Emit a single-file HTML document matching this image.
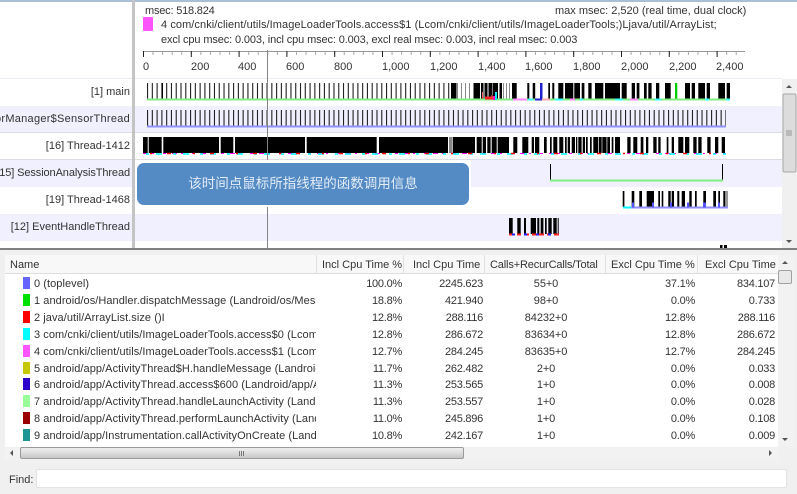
<!DOCTYPE html>
<html><head><meta charset="utf-8">
<style>
html,body{margin:0;padding:0;background:#fff}
#p{position:relative;width:797px;height:494px;overflow:hidden;background:#fff;font:11px/18px "Liberation Sans","Noto Sans CJK SC",sans-serif;color:#333;filter:blur(.3px)}
#p div{position:absolute;white-space:nowrap}
.l{right:667px;text-align:right}
.r{text-align:right;letter-spacing:-.25px}
.c{left:486px;width:120px;text-align:center;letter-spacing:-.1px}
.n{left:34px;width:282px;overflow:hidden;letter-spacing:.06px}
.s{left:23px;width:7px;height:12px}
.h{top:256px;height:16px;color:#333}
svg{position:absolute;left:0;top:0}
</style></head><body>
<div id="p">
<svg width="797" height="494" viewBox="0 0 797 494">
<rect x="0" y="0" width="797" height="2" fill="#a9bfd3"/>
<rect x="0" y="78" width="782" height="1" fill="#ececf2"/>
<rect x="0" y="106" width="782" height="26" fill="#f0f0ff"/>
<rect x="0" y="132" width="782" height="1" fill="#dcdce4"/>
<rect x="0" y="159" width="782" height="1" fill="#dcdce4"/>
<rect x="0" y="160" width="782" height="27" fill="#f0f0ff"/>
<rect x="0" y="214" width="782" height="27" fill="#f0f0ff"/>
<rect x="132" y="0" width="3" height="248" fill="#c4c4c4"/>
<rect x="135" y="160" width="336" height="47" fill="#fff"/>
<!-- ruler -->
<line x1="143" x2="745" y1="51.500" y2="51.500" stroke="#999"/>
<line x1="143" x2="745" y1="53.500" y2="53.500" stroke="#aaa" stroke-width="3" stroke-dasharray="1 8.560"/>
<line x1="143" x2="745" y1="54" y2="54" stroke="#222" stroke-width="6" stroke-dasharray="1 46.800"/>
<!-- row 1 -->
<line x1="147" x2="450" y1="91" y2="91" stroke="#222" stroke-width="16" stroke-dasharray="1.100 3.680"/>
<line x1="162" x2="163" y1="91" y2="91" stroke="#000" stroke-width="16"/>
<path fill="none" stroke="#000" stroke-width="16" d="M451 91h5.500M473.500 91h6.500M481 91h2.500M484.500 91h3M488.500 91h3.500M492.500 91h5.500M499.500 91h2.500M512 91h4.700M527.300 91h2M532.700 91h2.500M548.300 91h1.700M552.300 91h2M558.300 91h5M565 91h8.300M574.300 91h5.700M581.700 91h2.700M588.300 91h3.300M595 91h8.300M605 91h15M621.700 91h5M631.700 91h3.300M636.700 91h2.700M644 91h2.700M648.300 91h3.300M656 91h3.300M665 91h5.700M685 91h5M691.700 91h3.300M698.300 91h6.700M706.700 91h3.300M718.300 91h6.700M726.700 91h3.300"/>
<path fill="none" stroke="#888" stroke-width="16" d="M457 91h1M461 91h1M465 91h1M469 91h1M503 91h1M506 91h1M509 91h1"/>
<path fill="none" stroke="#22c" stroke-width="16" d="M540 91h2.500"/>
<path fill="none" stroke="#0c0" stroke-width="16" d="M675 91h2.300"/>
<line x1="147" x2="730" y1="99.500" y2="99.500" stroke="#80ee80" stroke-width="2"/>
<path fill="none" stroke="#f22" stroke-width="3" d="M482 97h1M485 98h8"/>
<path fill="none" stroke="#f66" stroke-width="1" d="M482.500 92v5M492 95v3"/>
<path fill="none" stroke="#0ef" stroke-width="2" d="M496 92v8"/>
<path fill="none" stroke="#f0c" stroke-width="2" d="M494 96v4"/>
<path fill="none" stroke="#f8f" stroke-width="2" d="M513 99.500h14M570 99.500h5M630 99.500h8"/>
<path fill="none" stroke="#3ff" stroke-width="2" d="M528 99.500h5M555 99.500h8M580 99.500h3M615 99.500h8M655 99.500h6M705 99.500h4M726 99.500h4"/>
<path fill="none" stroke="#22c" stroke-width="2" d="M535 99.500h7"/>
<path fill="none" stroke="#faa" stroke-width="2" d="M542 99.500h8"/>
<!-- row 2 -->
<line x1="147" x2="726" y1="118" y2="118" stroke="#222" stroke-width="16" stroke-dasharray="1.100 3.680"/>
<line x1="147" x2="726" y1="126.500" y2="126.500" stroke="#9090ff" stroke-width="2"/>
<!-- row 3 -->
<path fill="none" stroke="#000" stroke-width="16" d="M143 145h4.700M148.700 145h13M163.300 145h55.700M220.700 145h12.600M235 145h70M306.700 145h70M379 145h69M452.700 145h22.300M476.700 145h5M482.700 145h3.300M487.300 145h3.300M491.700 145h5M497.700 145h11.300M513.300 145h4M522.300 145h6M531.700 145h2.300M535 145h4.300M544 145h2.700M550 145h1.700M553.300 145h4M559.300 145h4M565 145h1.700M567.700 145h2.300M571.700 145h3.300M576 145h1.300M578.300 145h3.300M582.700 145h2.300M586 145h1.700M590 145h1.700M593.300 145h5M599 145h2.700M602.300 145h4.300M607.300 145h2.700M611.700 145h1.700M615 145h5M627.300 145h3.300M633.300 145h4M640.700 145h2.700M646 145h2.300M653.300 145h3.300M658.300 145h2.300M666.700 145h1.700M671.700 145h2.300M678.300 145h5M685 145h4.300M693.300 145h3.300M698.300 145h3.300M707.300 145h3.300M715 145h3.300M721.700 145h3.300"/>
<path fill="none" stroke="#888" stroke-width="16" d="M449 145h3"/>
<line x1="143" x2="726" y1="153.500" y2="153.500" stroke="#f0f" stroke-width="1" stroke-dasharray="5 4 2 9 3 6"/>
<line x1="146" x2="726" y1="154" y2="154" stroke="#0ff" stroke-width="1.500" stroke-dasharray="3 7 6 11"/>
<line x1="150" x2="726" y1="153.500" y2="153.500" stroke="#f00" stroke-width="1.500" stroke-dasharray="2 15 4 22"/>
<!-- row 4 -->
<path fill="none" stroke="#000" d="M550.500 164V181M722.500 164V181"/>
<line x1="550" x2="723" y1="180.500" y2="180.500" stroke="#80ee80" stroke-width="2"/>
<!-- row 5 -->
<path fill="none" stroke="#000" stroke-width="16" d="M622.700 199h1.700M631.700 199h2.600M639.300 199h2.700M646.700 199h7.300M658.300 199h1.700M661.700 199h1.600M668.300 199h2.400M671.700 199h2.300M677.300 199h2M681.700 199h3.300M689.300 199h2.400M695 199h1.700M703.300 199h2.700M713.300 199h2.700M718.300 199h1.700M723.300 199h2"/>
<path fill="none" stroke="#999" stroke-width="16" d="M725.300 199h2.700"/>
<line x1="623" x2="728" y1="207.500" y2="207.500" stroke="#9090ff" stroke-width="2"/>
<path fill="none" stroke="#55f" stroke-width="5" d="M632 205h2M652 205h2M670 205h2M687 205h2M703 205h3M718 205h2"/>
<path fill="none" stroke="#0ff" stroke-width="2" d="M623 207.500h8"/>
<!-- row 6 -->
<path fill="none" stroke="#000" stroke-width="16" d="M509 226h3.700M517.300 226h3.400M524 226h2M530.700 226h5.300M537.300 226h2M540.700 226h2.700M545 226h1.700M548.300 226h3.400M553.300 226h3.400M557.700 226h1"/>
<line x1="509" x2="559" y1="234.500" y2="234.500" stroke="#f22" stroke-width="2" stroke-dasharray="5 3 4 3"/>
<line x1="512" x2="559" y1="234.500" y2="234.500" stroke="#22f" stroke-width="2" stroke-dasharray="3 9"/>
<!-- row 7 -->
<path fill="none" stroke="#000" stroke-width="3" d="M720 246.500h2.500M724 246.500h3"/>
<!-- cursor -->
<path fill="none" stroke="#858585" d="M267.500 50V160M267.500 207V248"/>
<!-- callout -->
<rect x="137" y="163" width="332" height="42" rx="7" fill="#548bc4"/>
<!-- upper scrollbar -->
<rect x="782" y="79" width="15" height="169" fill="#f0f0f0"/>
<rect x="783" y="94" width="13" height="78" rx="1.500" fill="#dcdcdc" stroke="#a8a8a8"/>
<path fill="#555" d="M786 88l3-3 3 3zM786 240l3 3 3-3z"/>
<path stroke="#999" fill="none" d="M786 131h6M786 133h6M786 135h6"/>
<!-- lower pane -->
<rect x="0" y="248" width="797" height="2" fill="#808080"/>
<rect x="0" y="250" width="797" height="244" fill="#f0f0f0"/>
<rect x="5" y="255" width="773" height="192" fill="#fff"/>
<rect x="5" y="255" width="773" height="18" fill="#f8f8f8"/>
<rect x="5" y="273" width="773" height="1" fill="#dedede"/>
<path stroke="#e0e0e0" fill="none" d="M316.500 255V273M484.500 255V273M605.500 255V273M697.500 255V273M403.500 255V273"/>
<!-- right scrollbar -->
<rect x="778" y="255" width="15" height="191" fill="#f2f2f2"/>
<rect x="778.500" y="270.500" width="13" height="13" rx="1.500" fill="#e8e8e8" stroke="#a0a0a0"/>
<path fill="#555" d="M782 264l3-3 3 3zM782 438l3 3 3-3z"/>
<!-- h scrollbar -->
<rect x="5" y="447" width="773" height="13" fill="#f2f2f2"/>
<defs><linearGradient id="g" x1="0" y1="0" x2="0" y2="1"><stop offset="0" stop-color="#f0f0f0"/><stop offset=".5" stop-color="#dcdcdc"/><stop offset="1" stop-color="#c4c4c4"/></linearGradient></defs>
<rect x="20.500" y="447.500" width="443" height="11" rx="1.500" fill="url(#g)" stroke="#9a9a9a"/>
<path fill="#555" d="M13 450v6l-3-3zM769 450v6l3-3z"/>
<path stroke="#777" fill="none" d="M239.500 451v5M241.500 451v5M243.500 451v5"/>
<!-- find -->
<rect x="36.500" y="469.500" width="750" height="18" rx="1" fill="#fff" stroke="#e2e2e2"/>
</svg>

<div style="left:145px;top:2px;letter-spacing:-.2px">msec: 518.824</div>
<div style="left:555px;top:2px">max msec: 2,520 (real time, dual clock)</div>
<div style="left:143px;top:17px;width:10px;height:14px;background:#ff55ff"></div>
<div style="left:161px;top:16px;letter-spacing:.07px">4 com/cnki/client/utils/ImageLoaderTools.access$1 (Lcom/cnki/client/utils/ImageLoaderTools;)Ljava/util/ArrayList;</div>
<div style="left:161px;top:31px;letter-spacing:-.12px">excl cpu msec: 0.003, incl cpu msec: 0.003, excl real msec: 0.003, incl real msec: 0.003</div>

<div style="left:143px;top:58px">0</div>
<div style="left:191px;top:58px">200</div>
<div style="left:238px;top:58px">400</div>
<div style="left:286px;top:58px">600</div>
<div style="left:334px;top:58px">800</div>
<div style="left:382px;top:58px">1,000</div>
<div style="left:430px;top:58px">1,200</div>
<div style="left:478px;top:58px">1,400</div>
<div style="left:525px;top:58px">1,600</div>
<div style="left:573px;top:58px">1,800</div>
<div style="left:621px;top:58px">2,000</div>
<div style="left:669px;top:58px">2,200</div>
<div style="left:716px;top:58px">2,400</div>

<div class="l" style="top:83px">[1] main</div>
<div class="l" style="top:110px;letter-spacing:.27px">SensorManager$SensorThread</div>
<div class="l" style="top:137px">[16] Thread-1412</div>
<div class="l" style="top:164px;letter-spacing:-.1px">[15] SessionAnalysisThread</div>
<div class="l" style="top:191px">[19] Thread-1468</div>
<div class="l" style="top:218px">[12] EventHandleThread</div>

<div style="left:137px;top:163px;width:332px;height:42px;line-height:42px;text-align:center;color:#e4ecf6;font-size:13.5px">该时间点鼠标所指线程的函数调用信息</div>

<div class="h" style="left:10px">Name</div>
<div class="h" style="left:322px">Incl Cpu Time %</div>
<div class="h" style="left:413px">Incl Cpu Time</div>
<div class="h" style="left:490px;letter-spacing:-.15px">Calls+RecurCalls/Total</div>
<div class="h" style="left:611px">Excl Cpu Time %</div>
<div class="h" style="left:705px">Excl Cpu Time</div>

<div class="s" style="top:277px;background:#6666ff"></div><div class="n" style="top:275px">0 (toplevel)</div>
<div class="r" style="left:340px;width:62px;top:275px">100.0%</div><div class="r" style="left:420px;width:63px;top:275px">2245.623</div><div class="c" style="top:275px">55+0</div><div class="r" style="left:630px;width:65px;top:275px">37.1%</div><div class="r" style="left:710px;width:65px;top:275px">834.107</div>

<div class="s" style="top:294px;background:#00e000"></div><div class="n" style="top:292px">1 android/os/Handler.dispatchMessage (Landroid/os/Message;)V</div>
<div class="r" style="left:340px;width:62px;top:292px">18.8%</div><div class="r" style="left:420px;width:63px;top:292px">421.940</div><div class="c" style="top:292px">98+0</div><div class="r" style="left:630px;width:65px;top:292px">0.0%</div><div class="r" style="left:710px;width:65px;top:292px">0.733</div>

<div class="s" style="top:311px;background:#ff0000"></div><div class="n" style="top:309px">2 java/util/ArrayList.size ()I</div>
<div class="r" style="left:340px;width:62px;top:309px">12.8%</div><div class="r" style="left:420px;width:63px;top:309px">288.116</div><div class="c" style="top:309px">84232+0</div><div class="r" style="left:630px;width:65px;top:309px">12.8%</div><div class="r" style="left:710px;width:65px;top:309px">288.116</div>

<div class="s" style="top:328px;background:#00ffff"></div><div class="n" style="top:326px">3 com/cnki/client/utils/ImageLoaderTools.access$0 (Lcom/cnki/client)</div>
<div class="r" style="left:340px;width:62px;top:326px">12.8%</div><div class="r" style="left:420px;width:63px;top:326px">286.672</div><div class="c" style="top:326px">83634+0</div><div class="r" style="left:630px;width:65px;top:326px">12.8%</div><div class="r" style="left:710px;width:65px;top:326px">286.672</div>

<div class="s" style="top:345px;background:#ff55ff"></div><div class="n" style="top:343px">4 com/cnki/client/utils/ImageLoaderTools.access$1 (Lcom/cnki/client)</div>
<div class="r" style="left:340px;width:62px;top:343px">12.7%</div><div class="r" style="left:420px;width:63px;top:343px">284.245</div><div class="c" style="top:343px">83635+0</div><div class="r" style="left:630px;width:65px;top:343px">12.7%</div><div class="r" style="left:710px;width:65px;top:343px">284.245</div>

<div class="s" style="top:362px;background:#c8c800"></div><div class="n" style="top:360px">5 android/app/ActivityThread$H.handleMessage (Landroid/os/Message;)V</div>
<div class="r" style="left:340px;width:62px;top:360px">11.7%</div><div class="r" style="left:420px;width:63px;top:360px">262.482</div><div class="c" style="top:360px">2+0</div><div class="r" style="left:630px;width:65px;top:360px">0.0%</div><div class="r" style="left:710px;width:65px;top:360px">0.033</div>

<div class="s" style="top:378px;background:#2c00c8"></div><div class="n" style="top:376px">6 android/app/ActivityThread.access$600 (Landroid/app/ActivityThread;)V</div>
<div class="r" style="left:340px;width:62px;top:376px">11.3%</div><div class="r" style="left:420px;width:63px;top:376px">253.565</div><div class="c" style="top:376px">1+0</div><div class="r" style="left:630px;width:65px;top:376px">0.0%</div><div class="r" style="left:710px;width:65px;top:376px">0.008</div>

<div class="s" style="top:395px;background:#99ff99"></div><div class="n" style="top:393px">7 android/app/ActivityThread.handleLaunchActivity (Landroid/app/Activity)</div>
<div class="r" style="left:340px;width:62px;top:393px">11.3%</div><div class="r" style="left:420px;width:63px;top:393px">253.557</div><div class="c" style="top:393px">1+0</div><div class="r" style="left:630px;width:65px;top:393px">0.0%</div><div class="r" style="left:710px;width:65px;top:393px">0.028</div>

<div class="s" style="top:412px;background:#990000"></div><div class="n" style="top:410px">8 android/app/ActivityThread.performLaunchActivity (Landroid/app/Activity)</div>
<div class="r" style="left:340px;width:62px;top:410px">11.0%</div><div class="r" style="left:420px;width:63px;top:410px">245.896</div><div class="c" style="top:410px">1+0</div><div class="r" style="left:630px;width:65px;top:410px">0.0%</div><div class="r" style="left:710px;width:65px;top:410px">0.108</div>

<div class="s" style="top:429px;background:#1e9696"></div><div class="n" style="top:427px">9 android/app/Instrumentation.callActivityOnCreate (Landroid/app/Activity)</div>
<div class="r" style="left:340px;width:62px;top:427px">10.8%</div><div class="r" style="left:420px;width:63px;top:427px">242.167</div><div class="c" style="top:427px">1+0</div><div class="r" style="left:630px;width:65px;top:427px">0.0%</div><div class="r" style="left:710px;width:65px;top:427px">0.009</div>

<div style="left:9px;top:471px">Find:</div>
</div>
</body></html>
